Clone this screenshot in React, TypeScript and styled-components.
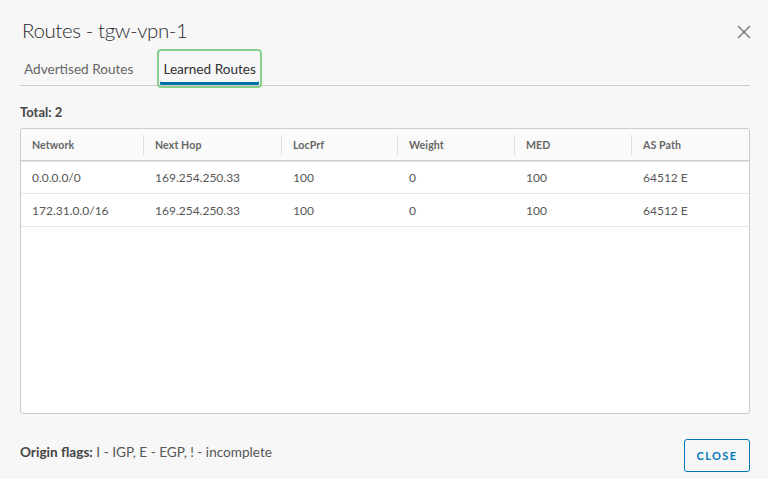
import React from "react";
import styled, { createGlobalStyle, css } from "styled-components";

const Global = createGlobalStyle`
  html, body { margin: 0; padding: 0; background: #f7f7f7; }
  body { font-family: Lato, "Open Sans", "Liberation Sans", sans-serif; color: #565656; }
  * { box-sizing: border-box; }
`;

const Dialog = styled.div`
  width: 768px;
  height: 479px;
  background: #f7f7f7;
  padding: 14px 18px 7px 20px;
  display: flex;
  flex-direction: column;
`;

const Header = styled.div`
  height: 32px;
  display: flex;
  align-items: center;
  justify-content: space-between;
`;

const Title = styled.h1`
  margin: 0 0 0 2px;
  font-size: 20.5px;
  font-weight: 300;
  color: #2b2b2b;
  letter-spacing: -0.4px;
`;

const CloseIcon = styled.button`
  border: 0;
  background: none;
  padding: 0;
  width: 16px;
  height: 16px;
  display: flex;
  align-items: center;
  justify-content: center;
  color: #747474;
  cursor: pointer;
  margin-right: -2px;
  margin-top: 4px;
`;

const TabBar = styled.div`
  margin-top: 6px;
  padding-left: 1px;
  display: flex;
  gap: 24px;
  border-bottom: 1px solid #cccccc;
`;

const Tab = styled.button<{ $active?: boolean }>`
  height: 33px;
  padding: 0 3px;
  border: 0;
  border-radius: 0;
  background: none;
  font-family: inherit;
  font-size: 13.6px;
  color: ${(p) => (p.$active ? "#313131" : "#666666")};
  cursor: pointer;
  ${(p) =>
    p.$active &&
    css`
      box-shadow: inset 0 -3px 0 #0072a3;
      outline: 2px solid #8ad08a;
      outline-offset: 1px;
      border-radius: 1px;
    `}
`;

const Total = styled.div`
  margin-top: 18px;
  height: 16px;
  line-height: 16px;
  font-size: 13px;
  font-weight: 700;
  color: #454545;
`;

const Grid = styled.div`
  margin-top: 8px;
  flex: 1;
  background: #ffffff;
  border: 1px solid #cccccc;
  border-radius: 3px;
  overflow: hidden;
`;

const Row = styled.div<{ $head?: boolean }>`
  display: grid;
  grid-template-columns: 122px 138px 116px 117px 117px 1fr;
  height: 33px;
  align-items: center;
  border-bottom: 1px solid #e6e6e6;
  ${(p) =>
    p.$head &&
    css`
      height: 32px;
      background: #fafafa;
      border-bottom: 1px solid #cccccc;
      box-shadow: 0 1px 1px rgba(0, 0, 0, 0.08);
      position: relative;
    `}
`;

const Cell = styled.div<{ $head?: boolean; $first?: boolean }>`
  position: relative;
  height: 100%;
  display: flex;
  align-items: center;
  padding-left: ${(p) => (p.$first ? "11px" : "12px")};
  font-size: 12px;
  color: #565656;
  white-space: nowrap;
  ${(p) =>
    p.$head &&
    css`
      font-size: 10.6px;
      font-weight: 700;
      color: #666666;
      letter-spacing: 0.1px;
    `}
  ${(p) =>
    p.$head &&
    !p.$first &&
    css`
      &::before {
        content: "";
        position: absolute;
        left: 0;
        top: 6px;
        bottom: 5px;
        width: 1px;
        background: #dddddd;
      }
    `}
`;

const Footer = styled.div`
  margin-top: 25px;
  height: 33px;
  display: flex;
  align-items: center;
  justify-content: space-between;
`;

const Flags = styled.div`
  font-size: 13.6px;
  color: #565656;
  margin-top: -8px;
  b {
    font-weight: 700;
    color: #454545;
  }
`;

const CloseButton = styled.button`
  width: 66px;
  height: 33px;
  border: 1px solid #0079b8;
  border-radius: 3px;
  background: transparent;
  color: #0079b8;
  font-family: inherit;
  font-size: 11px;
  font-weight: 700;
  letter-spacing: 1.4px;
  cursor: pointer;
  padding: 0;
`;

const columns = ["Network", "Next Hop", "LocPrf", "Weight", "MED", "AS Path"];
const rows = [
  ["0.0.0.0/0", "169.254.250.33", "100", "0", "100", "64512 E"],
  ["172.31.0.0/16", "169.254.250.33", "100", "0", "100", "64512 E"],
];

export default function App() {
  return (
    <>
      <Global />
      <Dialog>
        <Header>
          <Title>Routes - tgw-vpn-1</Title>
          <CloseIcon aria-label="Close">
            <svg width="14" height="14" viewBox="0 0 14 14">
              <path d="M1 1 L13 13 M13 1 L1 13" stroke="currentColor" strokeWidth="1.4" fill="none" />
            </svg>
          </CloseIcon>
        </Header>
        <TabBar>
          <Tab>Advertised Routes</Tab>
          <Tab $active>Learned Routes</Tab>
        </TabBar>
        <Total>Total: 2</Total>
        <Grid>
          <Row $head>
            {columns.map((c, i) => (
              <Cell key={c} $head $first={i === 0}>
                {c}
              </Cell>
            ))}
          </Row>
          {rows.map((r, ri) => (
            <Row key={ri}>
              {r.map((v, i) => (
                <Cell key={i} $first={i === 0}>
                  {v}
                </Cell>
              ))}
            </Row>
          ))}
        </Grid>
        <Footer>
          <Flags>
            <b>Origin flags:</b> I - IGP, E - EGP, ! - incomplete
          </Flags>
          <CloseButton>CLOSE</CloseButton>
        </Footer>
      </Dialog>
    </>
  );
}
